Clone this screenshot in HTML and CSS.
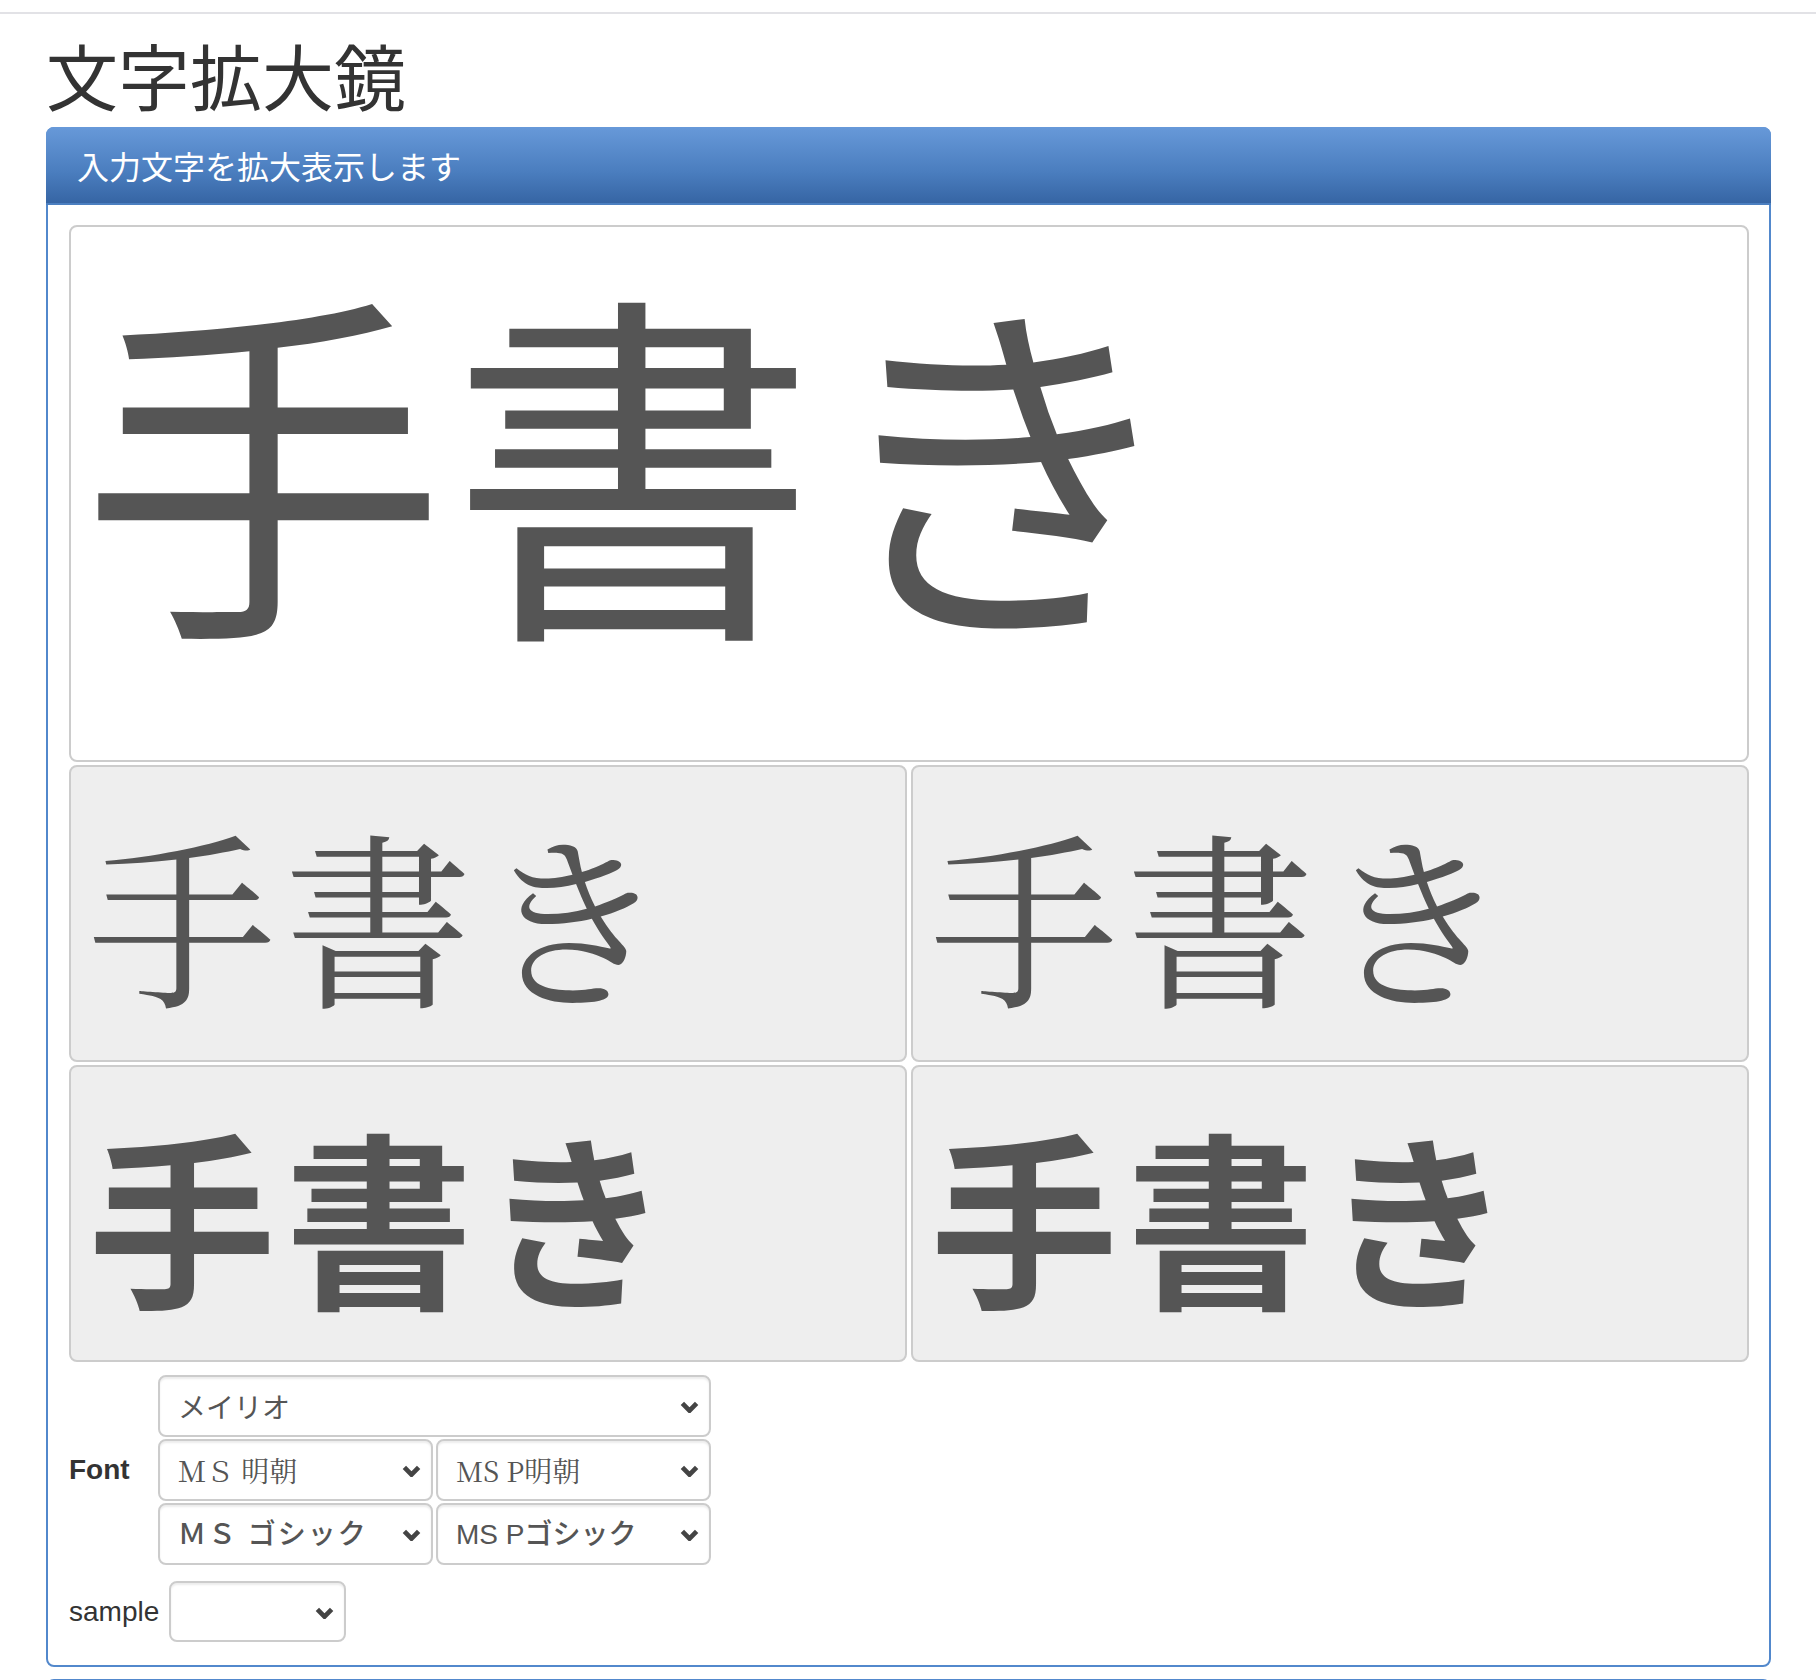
FILE: index.html
```html
<!DOCTYPE html>
<html lang="ja">
<head>
    <meta charset="UTF-8">
    <meta name="viewport" content="width=device-width, initial-scale=1.0">
    <title>文字拡大鏡</title>
    <link rel="stylesheet" href="styles.css">
</head>
<body>
    <div class="topbar"></div>

    <div class="container">
        <h1 class="title">文字拡大鏡</h1>

        <div class="panel">
            <div class="panel-heading">入力文字を拡大表示します</div>

            <div class="panel-body">
                <div class="big-text">手書き</div>

                <div class="samples">
                    <div class="sample-box mincho">手書き</div>
                    <div class="sample-box pmincho">手書き</div>
                    <div class="sample-box gothic">手書き</div>
                    <div class="sample-box pgothic">手書き</div>
                </div>

                <div class="font-row">
                    <label class="label-font">Font</label>
                    <div class="font-grid">
                        <div class="pick wide">
                            <select class="meiryo">
                                <option>メイリオ</option>
                            </select>
                            <svg class="chev" viewBox="0 0 16 10"><path d="M2 2l6 6 6-6"/></svg>
                        </div>
                        <div class="pick">
                            <select class="sel-mincho">
                                <option>ＭＳ 明朝</option>
                            </select>
                            <svg class="chev" viewBox="0 0 16 10"><path d="M2 2l6 6 6-6"/></svg>
                        </div>
                        <div class="pick">
                            <select class="sel-mincho">
                                <option>MS P明朝</option>
                            </select>
                            <svg class="chev" viewBox="0 0 16 10"><path d="M2 2l6 6 6-6"/></svg>
                        </div>
                        <div class="pick">
                            <select class="sel-gothic wide-letters">
                                <option>ＭＳ ゴシック</option>
                            </select>
                            <svg class="chev" viewBox="0 0 16 10"><path d="M2 2l6 6 6-6"/></svg>
                        </div>
                        <div class="pick">
                            <select class="sel-gothic">
                                <option>MS Pゴシック</option>
                            </select>
                            <svg class="chev" viewBox="0 0 16 10"><path d="M2 2l6 6 6-6"/></svg>
                        </div>
                    </div>
                </div>

                <div class="sample-row">
                    <label class="label-sample">sample</label>
                    <div class="pick small">
                        <select>
                            <option></option>
                        </select>
                        <svg class="chev" viewBox="0 0 16 10"><path d="M2 2l6 6 6-6"/></svg>
                    </div>
                </div>
            </div>
        </div>

        <div class="panel next"></div>
    </div>
</body>
</html>
```

FILE: styles.css
```css
* {
    margin: 0;
    padding: 0;
    box-sizing: border-box;
}

body {
    font-family: "Liberation Sans", Arial, "Noto Sans CJK JP", sans-serif;
    color: #333;
    background: #fff;
}

.topbar {
    height: 14px;
    border-bottom: 2px solid #e2e2e6;
}

.container {
    padding: 0 45px 0 46px;
}

.title {
    font-family: "Noto Sans CJK JP", sans-serif;
    font-size: 72px;
    font-weight: 400;
    line-height: 1.1;
    color: #333;
    padding-top: 20px;
    height: 113px;
}

.panel {
    border: 2px solid #5288cc;
    border-radius: 8px;
    background: #fff;
}

.panel-heading {
    height: 78px;
    margin: -2px -2px 0;
    padding: 0 0 0 31px;
    border-radius: 8px 8px 0 0;
    border-bottom: 2px solid #4b7fc0;
    background: linear-gradient(to bottom, #6799d9 0%, #4a7dbe 60%, #3665a4 100%);
    color: #fff;
    font-family: "Noto Sans CJK JP", sans-serif;
    font-size: 32px;
    line-height: 76px;
}

.panel-body {
    padding: 20px 20px 23px 21px;
}

.big-text {
    height: 537px;
    border: 2px solid #ccc;
    border-radius: 8px;
    background: #fff;
    padding: 41px 0 0 9px;
    font-family: "Noto Sans CJK JP", sans-serif;
    font-size: 366px;
    letter-spacing: 4px;
    line-height: 1;
    color: #555;
    white-space: nowrap;
    overflow: hidden;
}

.samples {
    display: grid;
    grid-template-columns: 1fr 1fr;
    gap: 3px 4px;
    margin-top: 3px;
}

.sample-box {
    height: 297px;
    border: 2px solid #ccc;
    border-radius: 8px;
    background: #eee;
    padding: 51px 0 0 17px;
    font-size: 188px;
    line-height: 1;
    color: #555;
    white-space: nowrap;
    overflow: hidden;
}

.mincho,
.pmincho {
    font-family: "Noto Serif CJK JP", "IPAMincho", "IPAexMincho", "Noto Sans CJK JP", serif;
    font-weight: 400;
    letter-spacing: 8px;
}

.gothic,
.pgothic {
    font-family: "Noto Sans CJK JP", sans-serif;
    font-weight: 700;
    letter-spacing: 9px;
}

.font-row {
    display: flex;
    align-items: center;
    margin-top: 13px;
}

.label-font {
    width: 89px;
    font-size: 28px;
    font-weight: 700;
    color: #333;
}

.font-grid {
    display: grid;
    grid-template-columns: 275px 275px;
    gap: 2px 3px;
}

.pick {
    position: relative;
    height: 62px;
}

.pick.wide {
    grid-column: span 2;
}

.pick select {
    width: 100%;
    height: 100%;
    appearance: none;
    -webkit-appearance: none;
    border: 2px solid #ccc;
    border-radius: 8px;
    background: #fff;
    box-shadow: inset 0 2px 2px rgba(0, 0, 0, 0.075);
    padding: 0 40px 0 18px;
    font-size: 28px;
    color: #555;
    outline: none;
}

.meiryo {
    font-family: "Noto Sans CJK JP", sans-serif;
}

.sel-mincho {
    font-family: "Noto Serif CJK JP", "Liberation Serif", "Noto Sans CJK JP", serif;
}

.sel-gothic {
    font-family: "Liberation Sans", "Noto Sans CJK JP", sans-serif;
    font-weight: 500;
    color: #4a4a4a;
}

.wide-letters {
    letter-spacing: 2px;
}

.chev {
    position: absolute;
    right: 12px;
    top: 50%;
    width: 19px;
    height: 12px;
    margin-top: -5px;
    fill: none;
    stroke: #444;
    stroke-width: 4;
}

.sample-row {
    display: flex;
    align-items: center;
    margin-top: 16px;
}

.label-sample {
    width: 100px;
    font-size: 28px;
    color: #333;
}

.pick.small {
    width: 177px;
    height: 61px;
}

.next {
    margin-top: 12px;
    height: 60px;
}
```
